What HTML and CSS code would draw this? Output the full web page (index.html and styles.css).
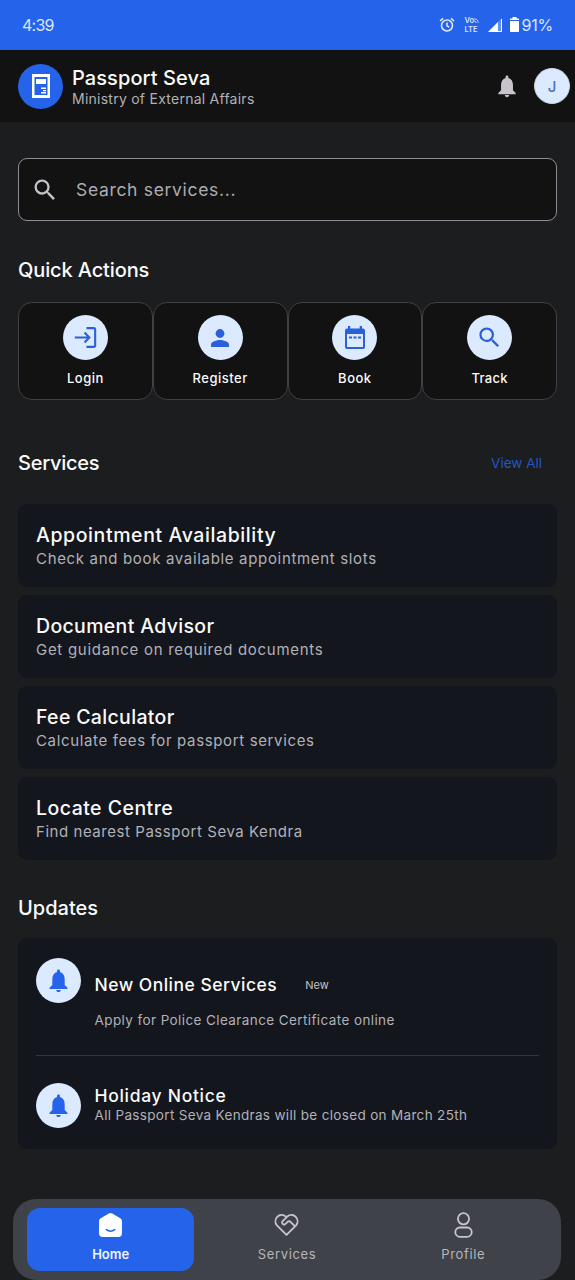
FILE: index.html
```html
<!DOCTYPE html>
<html lang="en">
<head>
<meta charset="utf-8">
<title>Passport Seva</title>
<link rel="stylesheet" href="styles.css">
</head>
<body>
<svg width="0" height="0" class="defs">
  <symbol id="bell" viewBox="0 0 24 24"><path d="M12 22.300c1.100 0 2-.9 2-1.900h-4c0 1 .9 1.900 2 1.900zm5.500-6.300v-5c0-3.070-1.300-5.640-4.200-6.500V3.600c0-.8-.5-1.300-1.300-1.300s-1.300.5-1.300 1.300v.9C7.800 5.360 6.500 7.920 6.500 11v5L4 18.500v1h16v-1L17.500 16z"/></symbol>
  <symbol id="search" viewBox="0 0 24 24"><path d="M15.500 14h-.79l-.28-.27A6.470 6.470 0 0 0 16 9.500 6.500 6.500 0 1 0 9.500 16c1.610 0 3.090-.59 4.230-1.570l.27.28v.79l5 4.990L20.490 19l-4.990-5zm-6 0C7.010 14 5 11.990 5 9.500S7.010 5 9.500 5 14 7.010 14 9.500 11.990 14 9.500 14z"/></symbol>
</svg>
<div class="status">
  <span class="time">4:39</span>
  <div class="status-icons">
    <svg class="alarm" viewBox="0 0 16 16"><circle cx="8" cy="8.500" r="5.500"/><path d="M8 5.500v3.300l2.300 1.300M1 4l3-2.600M15 4l-3-2.600"/></svg>
    <span class="volte"><span>Vo<svg viewBox="0 0 6 6"><path d="M0 1q5 0 5 5M0 3.500q2.500 0 2.500 2.500"/></svg></span><span>LTE</span></span>
    <svg class="signal" viewBox="0 0 14 14"><path d="M0 14 14 0v14z" fill="#5f8ff2"/><path d="M0 14 10 4v10z" fill="#fff"/><path d="M13.500 1v12.500H1" fill="none" stroke="#fff"/></svg>
    <svg class="battery" viewBox="0 0 9 15"><path d="M2.500 0h4v1.500H9V3H0V1.500h2.500zM0 4h9v10.200a.8.8 0 0 1-.8.8H.8a.8.8 0 0 1-.8-.8z"/></svg>
    <span class="percent">91%</span>
  </div>
</div>
<header class="header">
  <div class="logo"><svg viewBox="0 0 18 24"><path fill-rule="evenodd" d="M0 0h18v24H0zM2.500 3v18h13V3z"/><path d="M4 5h10v5H4zM9 13.500h5V15H9zM11 16h3v1.300h-3zM9 18h5v1.400H9z"/></svg></div>
  <div class="brand"><span class="brand-name">Passport Seva</span><span class="brand-sub">Ministry of External Affairs</span></div>
  <svg class="head-bell"><use href="#bell"/></svg>
  <div class="avatar">J</div>
</header>
<main>
  <div class="search"><svg><use href="#search"/></svg><span>Search services...</span></div>
  <h2 class="quick-title">Quick Actions</h2>
  <div class="actions">
    <div class="action"><i class="disc"><svg viewBox="0 0 24 24"><path class="line" d="M.8 12h15M11 6.800l5 5.200-5 5.200M13 2.200h7.600a1.500 1.500 0 0 1 1.500 1.500v16.600a1.500 1.500 0 0 1-1.500 1.500H13"/></svg></i><span class="a1">Login</span></div>
    <div class="action"><i class="disc"><svg class="person" viewBox="0 0 18 18"><circle cx="9" cy="4.500" r="4.400"/><path d="M0 18v-2.500C0 12.500 6 11 9 11s9 1.500 9 4.500V18z"/></svg></i><span class="a2">Register</span></div>
    <div class="action"><i class="disc"><svg class="cal" viewBox="0 0 20 23"><path fill-rule="evenodd" d="M3 0h2.300v2.500h9.400V0H17v2.500h1A2 2 0 0 1 20 4.500V21a2 2 0 0 1-2 2H2a2 2 0 0 1-2-2V4.500a2 2 0 0 1 2-2h1zM2 8v13h16V8z"/><path d="M4 10.500h3v2H4zM8.500 10.500h3v2h-3zM13 10.500h3v2h-3z"/></svg></i><span class="a3">Book</span></div>
    <div class="action"><i class="disc"><svg class="track"><use href="#search"/></svg></i><span class="a4">Track</span></div>
  </div>
  <div class="section-head"><h2 class="serv-title">Services</h2><a class="view-all">View All</a></div>
  <div class="services">
    <div class="card"><h3 class="t1">Appointment Availability</h3><p class="p1">Check and book available appointment slots</p></div>
    <div class="card"><h3 class="t2">Document Advisor</h3><p class="p2">Get guidance on required documents</p></div>
    <div class="card"><h3 class="t3">Fee Calculator</h3><p class="p3">Calculate fees for passport services</p></div>
    <div class="card"><h3 class="t4">Locate Centre</h3><p class="p4">Find nearest Passport Seva Kendra</p></div>
  </div>
  <h2 class="updates-title">Updates</h2>
  <div class="updates">
    <div class="update first"><i class="disc"><svg class="bell"><use href="#bell"/></svg></i>
      <div class="update-text"><div class="row"><h4 class="u1">New Online Services</h4><span class="tag">New</span></div><p class="q1">Apply for Police Clearance Certificate online</p></div></div>
    <div class="update second"><i class="disc"><svg class="bell"><use href="#bell"/></svg></i>
      <div class="update-text"><h4 class="u2">Holiday Notice</h4><p class="q2">All Passport Seva Kendras will be closed on March 25th</p></div></div>
  </div>
</main>
<nav class="nav">
  <div class="tab active"><svg viewBox="0 0 24 24"><path fill="#fff" d="M10.400.9a3 3 0 0 1 3.200 0l7.800 4.700A3.500 3.500 0 0 1 23 8.500V20a3.500 3.500 0 0 1-3.500 3.500h-15A3.500 3.500 0 0 1 1 20V8.500a3.500 3.500 0 0 1 1.600-2.900z"/><path class="smile" d="M8 16.500q4 3 8 0"/></svg><span class="n1">Home</span></div>
  <div class="tab"><svg viewBox="0 0 24 24"><path class="outline" d="M12 21.500 2.800 12.300A6 6 0 0 1 11.200 3.800L12 4.600l.8-.8a6 6 0 0 1 8.400 8.500zM12 4.600 8.300 8.300a1.900 1.900 0 0 0 2.700 2.700l1.800-1.800c1.300-1.200 2.500-.8 3.500.2l3.500 3.500"/></svg><span class="n2">Services</span></div>
  <div class="tab"><svg viewBox="0 0 24 26"><circle class="outline" cx="12" cy="6.800" r="5.600"/><rect class="outline" x="3.800" y="15.500" width="16.400" height="9.300" rx="4.600"/></svg><span class="n3">Profile</span></div>
</nav>
</body>
</html>
```
FILE: styles.css
```css
* { box-sizing: border-box; margin: 0; padding: 0; }
body { width: 575px; height: 1280px; overflow: hidden; background: #1c1d1f; color: #fafafa; font-family: Inter, "Liberation Sans", sans-serif; white-space: nowrap; display: flex; flex-direction: column; }
.defs { position: absolute; }
h2 { font-size: 20px; line-height: 24px; font-weight: 500; }
h3 { font-size: 19.500px; line-height: 24px; font-weight: 500; }
h4 { font-size: 17.500px; line-height: 22px; font-weight: 500; }
p { color: #b1b1b8; }
.status { height: 50px; flex: none; background: #2563eb; display: flex; align-items: center; justify-content: space-between; padding: 0 22px; font-size: 16px; line-height: 20px; color: #dce7fb; padding-bottom: 1px; }
.time { letter-spacing: -.75px; }
.percent { letter-spacing: -.2px; }
.status-icons { display: flex; align-items: center; }
.alarm { width: 16px; height: 16px; fill: none; stroke: #e5ecfb; stroke-width: 1.500; margin-right: 9px; }
.volte { display: flex; flex-direction: column; width: 16px; font-size: 7.500px; line-height: 9px; font-weight: 600; margin-right: 8px; }
.volte svg { width: 5px; height: 5px; fill: none; stroke: #dce7fb; }
.signal { width: 14px; height: 14px; margin-right: 8px; }
.battery { width: 9px; height: 15px; fill: #fff; margin-right: 2px; }
.header { height: 72px; flex: none; background: #121212; display: flex; align-items: center; padding: 0 5px 0 18px; }
.logo { width: 45px; height: 45px; border-radius: 50%; background: #2563eb; display: flex; align-items: center; justify-content: center; }
.logo svg { width: 18px; height: 24px; fill: #fff; }
.brand { display: flex; flex-direction: column; margin-left: 9px; flex: 1; padding-top: 1px; }
.brand-name { font-size: 20px; line-height: 24px; font-weight: 500; letter-spacing: .08px; }
.brand-sub { font-size: 14px; line-height: 18px; color: #b1b1b5; letter-spacing: .25px; }
.head-bell { width: 26px; height: 26px; fill: #c9c3cd; margin-right: 14px; }
.avatar { width: 36px; height: 36px; border-radius: 50%; background: #dbeafe; border: 1px solid #c8d4e6; color: #4972bd; font-size: 15px; font-weight: 500; display: flex; align-items: center; justify-content: center; }
main { padding: 36px 18px 0; flex: 1; }
.search { height: 63px; border: 1px solid #8b8d92; border-radius: 9px; background: #121212; display: flex; align-items: center; padding-left: 12px; color: #adadb1; font-size: 17.500px; letter-spacing: .68px; }
.search svg { width: 28px; height: 28px; fill: #c7c2ca; margin-right: 17px; }
.quick-title { margin-top: 37px; letter-spacing: -.12px; }
.actions { display: grid; grid-template-columns: repeat(4, 1fr); margin-top: 20px; }
.action { height: 98px; border: 1px solid #3e4145; border-radius: 14px; background: #121212; display: flex; flex-direction: column; align-items: center; padding-top: 12px; font-size: 13px; line-height: 16px; font-weight: 500; gap: 10px; letter-spacing: .5px; }
.a4 { letter-spacing: .25px; }
.disc { width: 45px; height: 45px; flex: none; border-radius: 50%; background: #dbeafe; display: flex; align-items: center; justify-content: center; }
.disc svg { width: 23px; height: 23px; fill: #2b60dd; }
.disc .line { fill: none; stroke: #2b60dd; stroke-width: 2.200; }
.disc .person { width: 18px; height: 18px; }
.disc .cal { width: 20px; height: 23px; }
.disc .track { width: 27px; height: 27px; }
.disc .bell { width: 27px; height: 27px; fill: #2563eb; }
.section-head { display: flex; justify-content: space-between; align-items: center; margin-top: 51px; padding-right: 15px; }
.serv-title { letter-spacing: -.25px; }
.view-all { color: #2156c6; font-size: 13.500px; }
.services { display: grid; gap: 8px; margin-top: 29px; }
.card { height: 83px; border-radius: 9px; background: #14161d; padding: 19px 18px; }
.card p { font-size: 15px; line-height: 23px; }
.t1 { letter-spacing: .6px; }
.t2 { letter-spacing: .33px; }
.t3 { letter-spacing: .33px; }
.t4 { letter-spacing: .47px; }
.p1 { letter-spacing: .67px; }
.p2 { letter-spacing: .71px; }
.p3 { letter-spacing: .64px; }
.p4 { letter-spacing: .55px; }
.u1 { letter-spacing: .48px; }
.u2 { letter-spacing: .7px; }
.q1 { letter-spacing: .4px; }
.q2 { letter-spacing: .33px; }
.n2, .n3 { letter-spacing: .65px; }
.updates-title { margin-top: 36px; }
.updates { height: 211px; margin-top: 18px; border-radius: 9px; background: #14161d; padding: 20px 18px; }
.update { display: flex; gap: 13.500px; }
.update p { font-size: 13.500px; line-height: 18px; }
.first { height: 98px; border-bottom: 1px solid #31353d; }
.first .update-text { padding-top: 16px; }
.first p { margin-top: 15px; }
.row { display: flex; align-items: center; }
.tag { font-size: 11px; line-height: 14px; color: #c2c2c7; margin-left: 28px; }
.second { padding-top: 27px; }
.second .update-text { padding-top: 2px; }
.second p { margin-top: -1px; }
.nav { flex: none; height: 81px; margin: 0 14px 0 13px; background: #404249; border-radius: 23px; padding: 9px 14px; display: grid; grid-template-columns: repeat(3, 1fr); gap: 9px; }
.tab { height: 63px; border-radius: 13px; display: flex; flex-direction: column; align-items: center; padding-top: 4px; font-size: 13px; line-height: 18px; color: #b5b5bc; }
.tab svg { width: 25px; height: 26px; margin-bottom: 7px; }
.tab .outline { fill: none; stroke: #c6c4cd; stroke-width: 1.800; stroke-linejoin: round; stroke-linecap: round; }
.active { background: #2563eb; color: #f1f5fe; font-weight: 600; }
.smile { fill: none; stroke: #2563eb; stroke-width: 1.500; stroke-linecap: round; }
```
